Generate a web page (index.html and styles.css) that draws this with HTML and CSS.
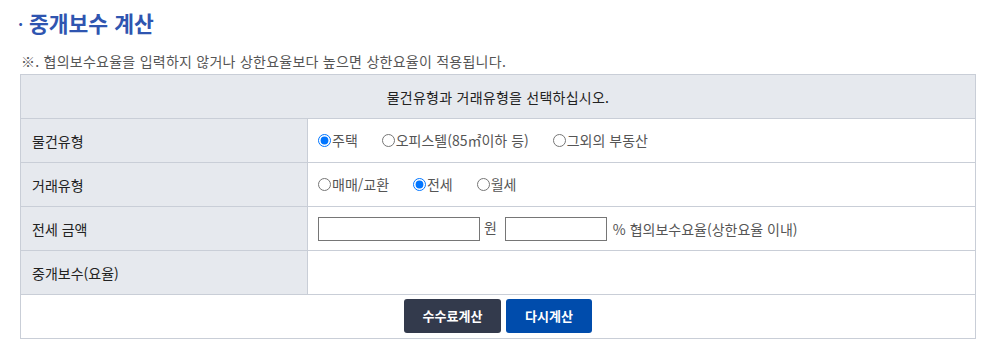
FILE: index.html
```html
<!DOCTYPE html>
<html lang="ko">

<head>
    <meta charset="UTF-8">
    <title>중개보수 계산</title>
    <link rel="stylesheet" href="styles.css">
</head>

<body>
    <div class="calc">
        <h2 class="calc-title"><span class="dot">·</span>중개보수 계산</h2>
        <p class="calc-note">※. 협의보수요율을 입력하지 않거나 상한요율보다 높으면 상한요율이 적용됩니다.</p>
        <table class="calc-table">
            <tr>
                <th colspan="2" class="head">물건유형과 거래유형을 선택하십시오.</th>
            </tr>
            <tr>
                <th>물건유형</th>
                <td>
                    <label class="opt"><input type="radio" name="kind" checked>주택</label>
                    <label class="opt"><input type="radio" name="kind">오피스텔(85㎡이하 등)</label>
                    <label class="opt"><input type="radio" name="kind">그외의 부동산</label>
                </td>
            </tr>
            <tr>
                <th>거래유형</th>
                <td>
                    <label class="opt"><input type="radio" name="deal">매매/교환</label>
                    <label class="opt"><input type="radio" name="deal" checked>전세</label>
                    <label class="opt"><input type="radio" name="deal">월세</label>
                </td>
            </tr>
            <tr>
                <th>전세 금액</th>
                <td>
                    <input type="text" class="inp inp-money"><span class="unit">원</span>
                    <input type="text" class="inp inp-rate"><span class="unit rate-txt">% 협의보수요율(상한요율 이내)</span>
                </td>
            </tr>
            <tr>
                <th>중개보수(요율)</th>
                <td></td>
            </tr>
            <tr>
                <td colspan="2" class="btns">
                    <a href="#" class="btn btn-dark">수수료계산</a>
                    <a href="#" class="btn btn-blue">다시계산</a>
                </td>
            </tr>
        </table>
    </div>
</body>

</html>
```

FILE: styles.css
```css
* {
    padding: 0;
    margin: 0;
    box-sizing: border-box;
}

body {
    font-family: "Noto Sans CJK KR", "Noto Sans", sans-serif;
    font-size: 14px;
    color: #222;
    background: #fff;
}

.calc {
    padding: 8px 13px 0 20px;
}

.calc-title {
    font-size: 21.5px;
    font-weight: 700;
    color: #2f55b0;
    line-height: 30px;
    height: 30px;
}

.calc-title .dot {
    display: inline-block;
    width: 11px;
    margin-left: -2px;
    font-size: 16px;
    vertical-align: 1px;
}

.calc-note {
    color: #555;
    font-size: 14px;
    line-height: 20px;
    margin-top: 13px;
    margin-left: 1px;
    letter-spacing: 0.25px;
}

.calc-table {
    width: 956px;
    margin-top: 3px;
    border-collapse: collapse;
    border: 1px solid #c9ced7;
}

.calc-table th,
.calc-table td {
    height: 44px;
    border: 1px solid #c9ced7;
    font-weight: 400;
    text-align: left;
    vertical-align: middle;
}

.calc-table th {
    width: 287px;
    background: #e6e9ee;
    padding-left: 11px;
    color: #222;
}

.calc-table th.head {
    text-align: center;
    padding-left: 0;
    letter-spacing: 0.25px;
}

.calc-table td {
    padding: 0 10px;
    color: #555;
}

.opt {
    display: inline-flex;
    align-items: center;
    margin-right: 20px;
    color: #555;
}

.opt input {
    width: 13px;
    height: 13px;
    margin: 0 1px 0 0;
}

.inp {
    height: 24px;
    border: 1px solid #767676;
    vertical-align: middle;
}

.inp-money {
    width: 162px;
}

.inp-rate {
    width: 102px;
}

.unit {
    display: inline-block;
    margin: -4px 4px 0 4px;
    vertical-align: middle;
}

.rate-txt {
    margin: 0 0 0 6px;
}

.calc-table td.btns {
    text-align: center;
    padding: 0 0 2px;
    font-size: 0;
}

.btn {
    display: inline-block;
    height: 34px;
    line-height: 34px;
    border-radius: 3px;
    font-size: 13px;
    font-weight: 700;
    color: #fff;
    text-decoration: none;
    vertical-align: middle;
}

.btn-dark {
    background: #333a4c;
    width: 97px;
}

.btn-blue {
    background: #004cac;
    width: 86px;
    margin-left: 5px;
}
```
